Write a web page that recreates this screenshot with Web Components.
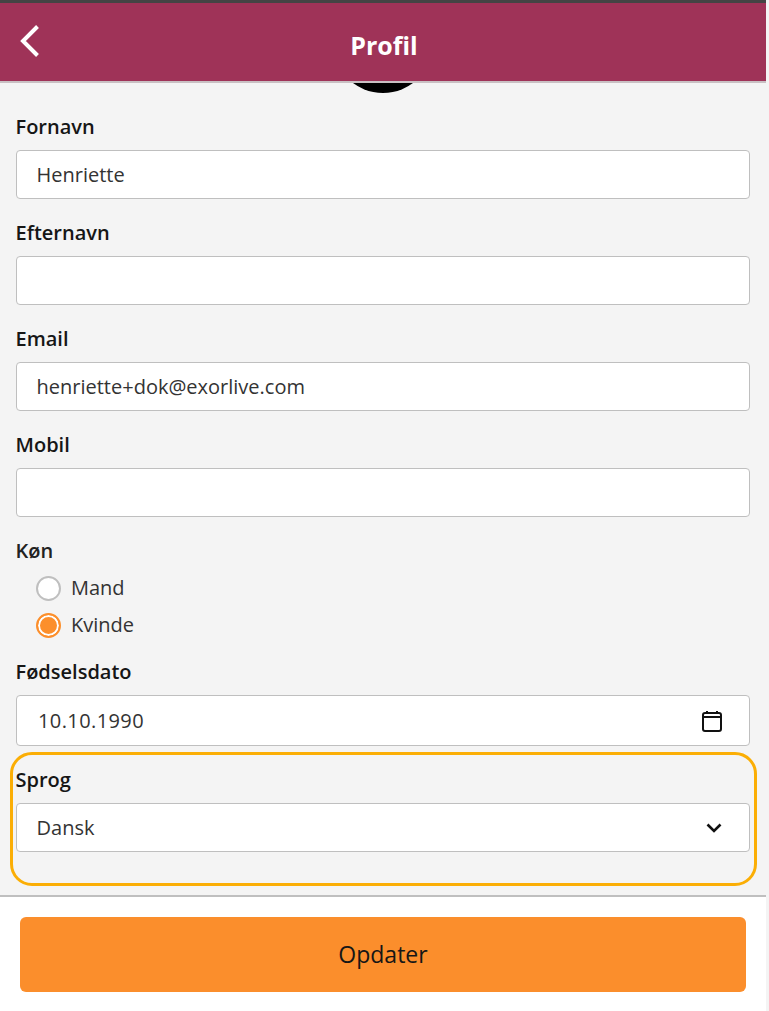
<!DOCTYPE html>
<html lang="da"><head><meta charset="utf-8"><title>Profil</title>
<style>
html,body{margin:0;padding:0;height:100%;background:#f4f4f4;font-family:"Open Sans",sans-serif;overflow:hidden}
</style></head><body>
<profile-app>
  <app-header slot="header">Profil</app-header>
  <form-field label="Fornavn" value="Henriette"></form-field>
  <form-field label="Efternavn"></form-field>
  <form-field label="Email" value="henriette+dok@exorlive.com"></form-field>
  <form-field label="Mobil"></form-field>
  <radio-group label="Køn"><radio-item>Mand</radio-item><radio-item checked>Kvinde</radio-item></radio-group>
  <form-field label="Fødselsdato" value="10.10.1990" kind="date"></form-field>
  <form-field label="Sprog" value="Dansk" kind="select"></form-field>
  <app-button slot="footer">Opdater</app-button>
</profile-app>
<script>
function def(name,html,setup){
  customElements.define(name,class extends HTMLElement{
    connectedCallback(){
      if(this.shadowRoot)return;
      const r=this.attachShadow({mode:'open'});
      r.innerHTML=html;
      if(setup)setup(this,r);
    }
  });
}
def('profile-app',`<style>
:host{display:flex;flex-direction:column;width:766px;height:1011px;background:#f4f4f4;position:relative;border-top:3px solid #444;box-sizing:border-box}
main{flex:1;min-height:0;padding:0 16px;position:relative;overflow:hidden;box-sizing:border-box}
.avatar{position:absolute;left:333px;top:-90px;width:100px;height:100px;border-radius:50%;background:#000}
.list{padding-top:31px;position:relative}
footer{flex:none;height:116px;box-sizing:border-box;border-top:2px solid #bfbfbf;background:#fff;padding:20px 20px 19px}
.mark{position:absolute;left:10px;top:669px;width:747px;height:134px;box-sizing:border-box;border:3px solid #fbae05;border-radius:22px;pointer-events:none}
</style><slot name="header"></slot><main><div class="avatar"></div><div class="list"><slot></slot></div><div class="mark"></div></main><footer><slot name="footer"></slot></footer>`);
def('app-header',`<style>
:host{display:flex;flex:none;height:80px;box-sizing:border-box;background:#9f3358;border-bottom:2px solid #c9c0c3;align-items:center;justify-content:center;position:relative;color:#fff;font:700 25px/32px "Open Sans",sans-serif;z-index:1}
svg{position:absolute;left:18px;top:20px}
span{position:relative;top:3px;left:1px}
</style><svg width="24" height="36" viewBox="0 0 24 36" fill="none" stroke="#fff" stroke-width="4"><path d="M19.5 3.5 5 18l14.5 14.5"/></svg><span><slot></slot></span>`);
def('form-field',`<style>
:host{display:block;margin-bottom:21px;color:#222}
label{display:block;font:600 20px/25px "Open Sans",sans-serif;color:#161616;margin:0 0 11px -.5px}
.box{display:flex;align-items:center;height:49px;box-sizing:border-box;width:734px;border:1px solid #bfbfbf;border-radius:4px;background:#fff;padding:0 20px 0 19.5px;font:400 20px/26px "Open Sans",sans-serif;color:#333}
.v{flex:1}
:host([kind=date]) .box{height:51px;padding-left:21px;padding-right:26px}
:host([kind=date]) .v{letter-spacing:.4px}
:host([kind=select]) .box{padding-right:27px}
svg{display:block}
</style><label></label><div class="box"><span class="v"></span><slot></slot></div>`,(h,r)=>{
  r.querySelector('label').textContent=h.getAttribute('label');
  r.querySelector('.v').textContent=h.getAttribute('value')||'';
  const k=h.getAttribute('kind'),b=r.querySelector('.box');
  if(k==='date')b.insertAdjacentHTML('beforeend','<svg width="22" height="25" viewBox="0 0 22 25" fill="none" stroke="#111" stroke-width="2"><rect x="2" y="5" width="18" height="18" rx="2"/><path d="M2 9h18M6 3v3M16 3v3"/></svg>');
  if(k==='select')b.insertAdjacentHTML('beforeend','<svg width="16" height="10" viewBox="0 0 16 10" fill="none" stroke="#111" stroke-width="2.6"><path d="M1.5 1.5 8 8l6.5-6.5"/></svg>');
});
def('radio-group',`<style>
:host{display:block;margin-bottom:18px}
.l{font:600 20px/25px "Open Sans",sans-serif;color:#222;margin:0 0 9px -.5px}
.items{display:flex;flex-direction:column;gap:5px;padding-left:20px}
</style><div class="l"></div><div class="items"><slot></slot></div>`,(h,r)=>{r.querySelector('.l').textContent=h.getAttribute('label')});
def('radio-item',`<style>
:host{display:flex;align-items:center;gap:10px;height:32px;font:400 20px/26px "Open Sans",sans-serif;color:#333}
.c{width:25px;height:25px;box-sizing:border-box;border-radius:50%;border:2px solid #bfbfbf;background:#fff}
:host([checked]) .c{border-color:#fc8f2c;background:#fc8f2c;box-shadow:inset 0 0 0 2px #fff}
</style><span class="c"></span><span><slot></slot></span>`);
def('app-button',`<style>
:host{display:flex;align-items:center;justify-content:center;height:75px;box-sizing:border-box;border-radius:6px;background:#fb8e2c;color:#161616;font:500 23px/32px "Open Sans",sans-serif;padding-bottom:2px}
</style><slot></slot>`);
</script>
</body></html>
